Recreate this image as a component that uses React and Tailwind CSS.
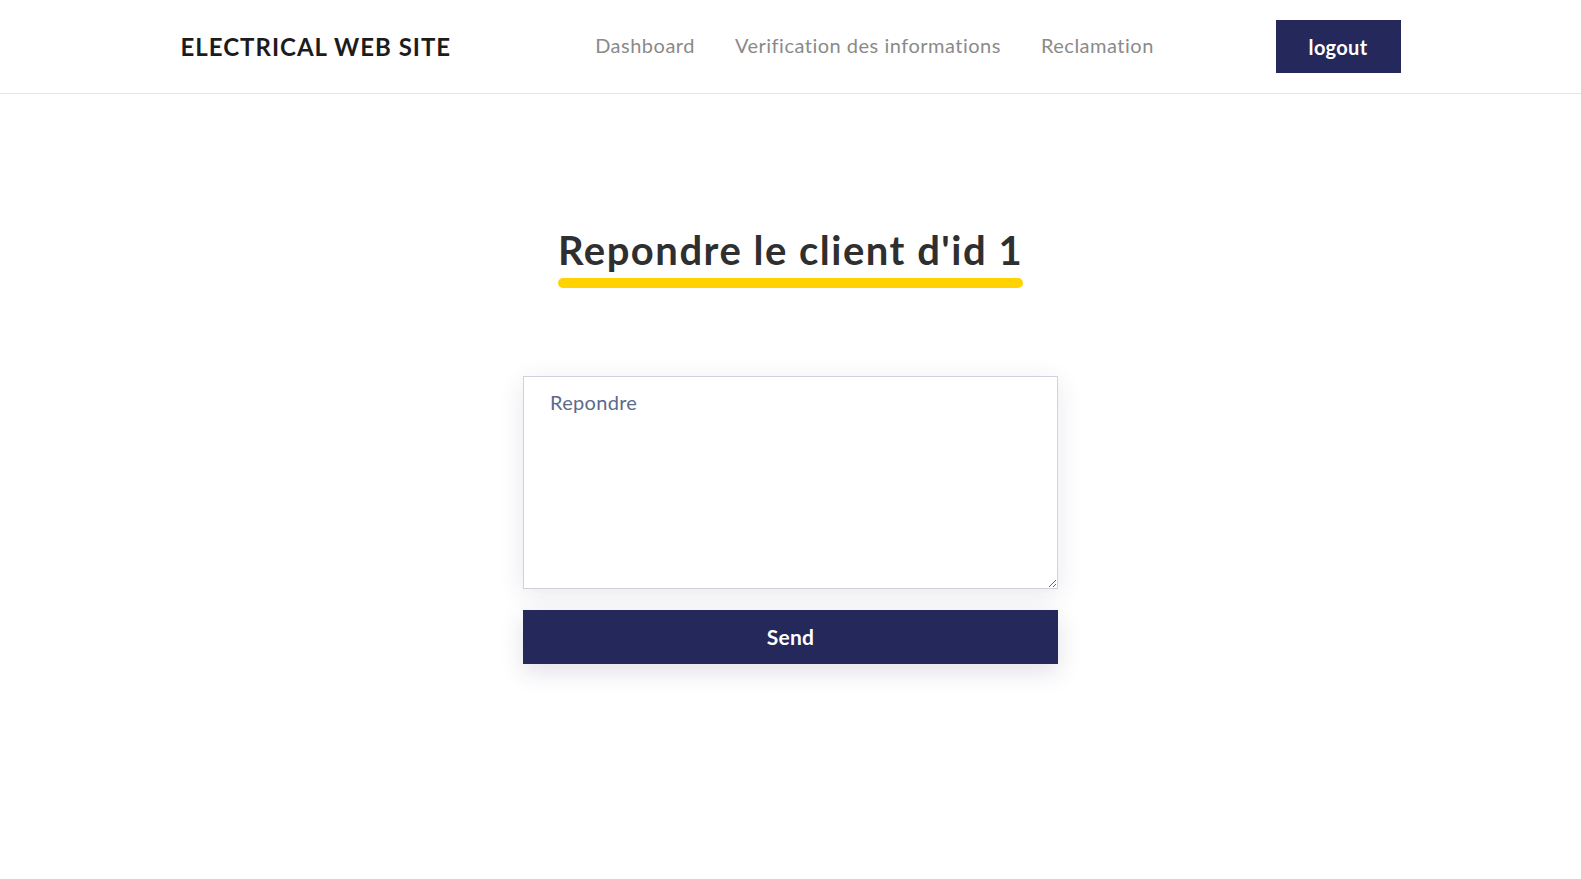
import React from 'react';

const font = { fontFamily: 'Lato, "Open Sans", sans-serif' };

const Header = () => (
  <header className="h-[94px] border-b border-[#e6e6e6] bg-white">
    <div className="mx-auto flex h-full w-[1220px] items-center">
      <div className="text-[24px] font-bold tracking-[1px] text-[#1c1c1c]">ELECTRICAL WEB SITE</div>
      <nav className="ml-[144px] flex items-center gap-[40px] pb-[3px] text-[20px] tracking-[0.5px] text-[#8a8a8a]">
        <a href="#">Dashboard</a>
        <a href="#">Verification des informations</a>
        <a href="#">Reclamation</a>
      </nav>
      <button className="ml-auto h-[53px] w-[125px] bg-[#25285a] text-[20px] font-bold tracking-[0.3px] text-white">
        logout
      </button>
    </div>
  </header>
);

export default function App() {
  return (
    <div className="min-h-screen bg-white" style={font}>
      <Header />
      <main className="flex flex-col items-center pt-[132px]">
        <div className="inline-flex flex-col">
          <h1 className="text-[40px] font-bold leading-[48px] tracking-[1.5px] text-[#2f2f2f]">Repondre le client d'id 1</h1>
          <div className="mt-[4px] h-[10px] w-full rounded-full bg-[#ffd200]" />
        </div>
        <form className="mt-[88px] flex w-[535px] flex-col">
          <textarea
            placeholder="Repondre"
            className="h-[213px] w-full border border-[#cfd2d8] bg-white px-[26px] py-[10px] text-[20px] tracking-[0.3px] text-[#333] shadow-[0_6px_24px_rgba(40,45,90,0.11)] placeholder:text-[#5b6a8c] outline-none"
          />
          <button type="button" className="mt-[21px] h-[54px] w-full bg-[#25285a] text-[21px] font-bold tracking-[0.3px] text-white shadow-[0_8px_24px_rgba(40,45,90,0.14)]">
            Send
          </button>
        </form>
      </main>
    </div>
  );
}
